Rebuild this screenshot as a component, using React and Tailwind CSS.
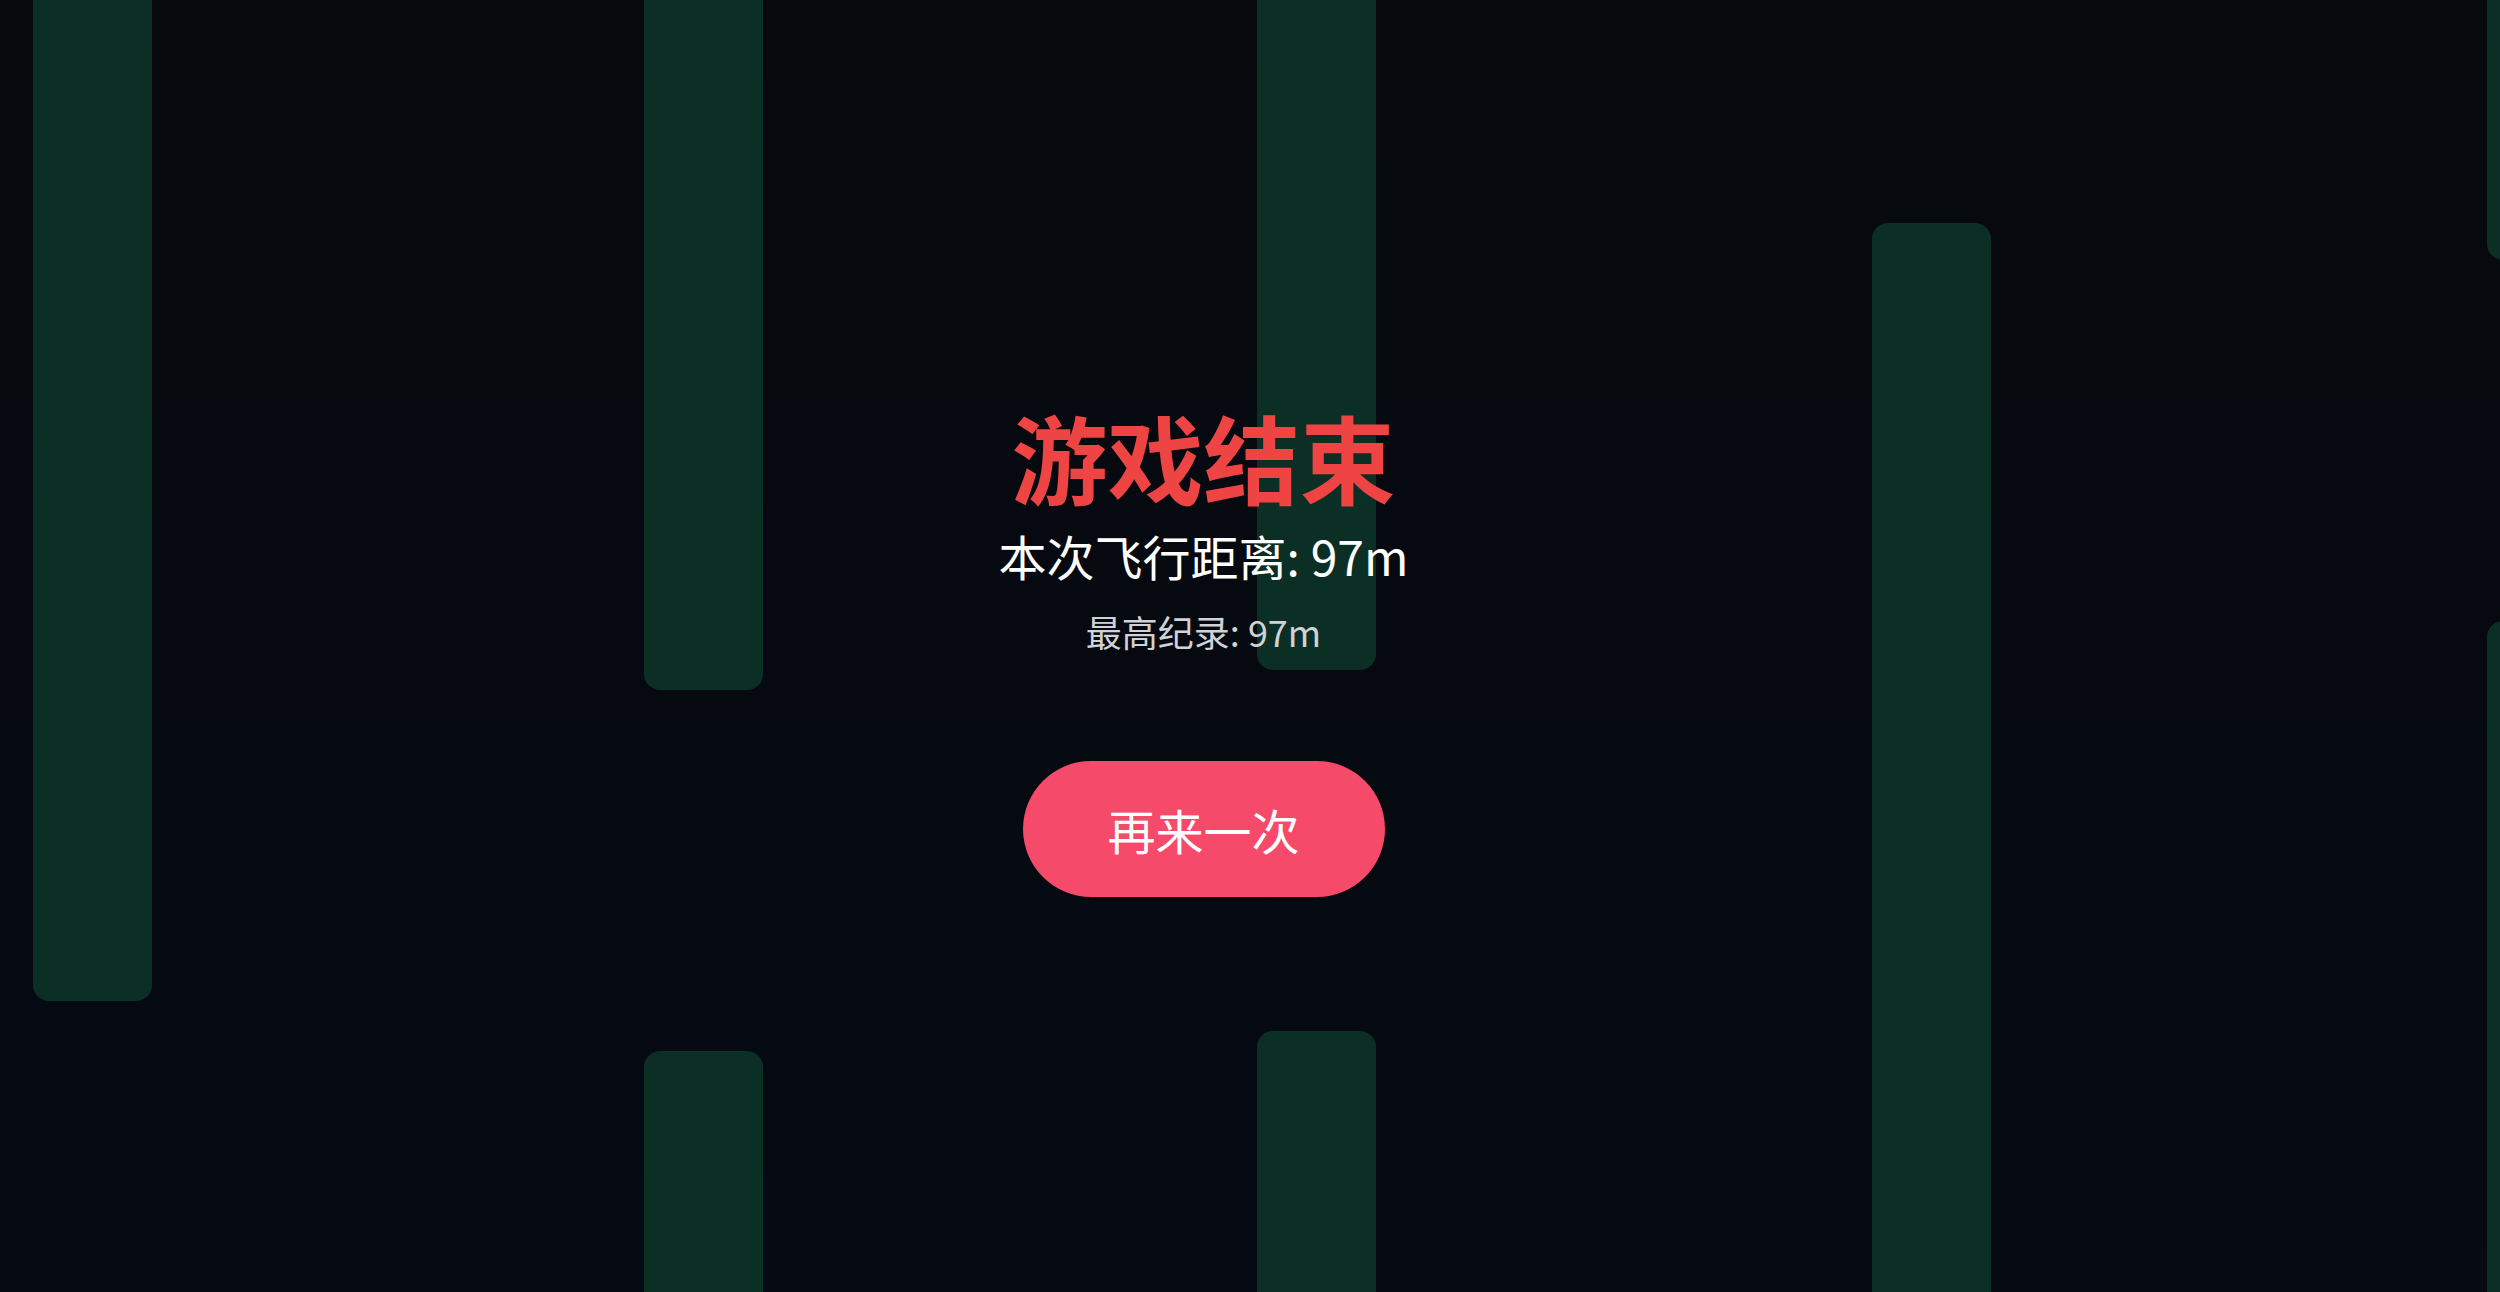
import { useState } from 'react';

const PIPE_W = 119;
const GAP = 361;

// x of each pipe and the y where its gap starts
const pipes = [
    { x: 33, gapTop: 1001 },
    { x: 644, gapTop: 690 },
    { x: 1257, gapTop: 670 },
    { x: 1872, gapTop: -138 },
    { x: 2487, gapTop: 260 },
];

function Pipe({ x, gapTop }) {
    return (
        <>
            {gapTop > 0 && (
                <div
                    className="absolute top-0 rounded-b-[16px] bg-[#0b2e25]"
                    style={{ left: x, width: PIPE_W, height: gapTop }}
                />
            )}
            <div
                className="absolute rounded-t-[16px] bg-[#0b2e25]"
                style={{ left: x, width: PIPE_W, top: gapTop + GAP, height: 2000 }}
            />
        </>
    );
}

export default function App() {
    const [best] = useState(97);
    const distance = 97;

    return (
        <div
            className="relative h-screen w-full overflow-hidden bg-gradient-to-b from-[#07090d] to-[#050a13]"
            style={{ fontFamily: '"Noto Sans CJK SC", "Noto Sans", sans-serif' }}
        >
            {pipes.map((p, i) => (
                <Pipe key={i} {...p} />
            ))}

            <div className="relative z-10 flex h-full flex-col items-center justify-center pr-[93px] pt-[12px]">
                <h1 className="text-[96px] font-bold leading-none text-[#ef4444]">游戏结束</h1>
                <p className="mt-[27px] text-[48px] leading-none text-white">本次飞行距离: {distance}m</p>
                <p className="mt-[34px] text-[36px] leading-none text-[#cfd2d6]">最高纪录: {best}m</p>
                <button className="mt-[112px] flex h-[136px] w-[362px] items-center justify-center rounded-full bg-[#f54a6a] text-[48px] leading-none text-white">
                    再来一次
                </button>
            </div>
        </div>
    );
}
